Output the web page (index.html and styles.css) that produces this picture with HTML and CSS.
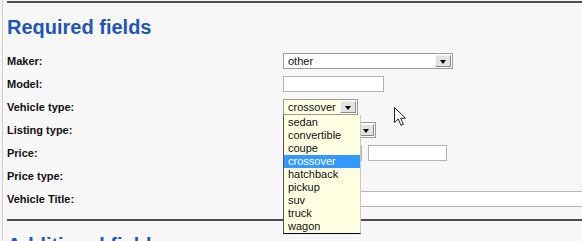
FILE: index.html
```html
<!DOCTYPE html>
<html>
<head>
<meta charset="utf-8">
<title>Add listing</title>
<link rel="stylesheet" href="styles.css">
</head>
<body>
<div class="page">
	<div class="rule"></div>
	<h2>Required fields</h2>

	<div class="row">
		<label>Maker:</label>
		<div class="select maker"><span class="value">other</span><span class="btn"></span></div>
	</div>
	<div class="row">
		<label>Model:</label>
		<div class="input model"></div>
	</div>
	<div class="row">
		<label>Vehicle type:</label>
		<div class="select vtype open">
			<span class="value">crossover</span><span class="btn"></span>
			<ul class="list">
				<li>sedan</li>
				<li>convertible</li>
				<li>coupe</li>
				<li class="picked">crossover</li>
				<li>hatchback</li>
				<li>pickup</li>
				<li>suv</li>
				<li>truck</li>
				<li>wagon</li>
			</ul>
		</div>
	</div>
	<div class="row">
		<label>Listing type:</label>
		<div class="select ltype"><span class="value"></span><span class="btn"></span></div>
	</div>
	<div class="row">
		<label>Price:</label>
		<div class="input price"></div>
		<div class="input price2"></div>
	</div>
	<div class="row">
		<label>Price type:</label>
		<div class="select ptype"><span class="value"></span><span class="btn"></span></div>
	</div>
	<div class="row">
		<label>Vehicle Title:</label>
		<div class="input title"></div>
	</div>

	<div class="rule low"></div>
	<h2>Additional fields</h2>
</div>

<svg class="cursor" width="14" height="20" viewBox="0 0 14 20">
	<path d="M0.5 0.5 L0.5 15.5 L4.2 12 L7 18.3 L9.4 17.3 L6.7 11.2 L11.5 11.2 Z" fill="#fff" stroke="#222" stroke-width="1" stroke-linejoin="round"/>
</svg>
</body>
</html>
```

FILE: styles.css
```css
html, body {
		margin:0;
		padding:0;
		overflow:hidden;
		background:#f7f7f7;
	}

body {
		font-family:"Liberation Sans", Arial, sans-serif;
		color:#111;
		width:582px;
		height:241px;
	}

.page {
		margin-left:2px;
		border-left:1px solid #cfcfcf;
		padding-left:4px;
		height:241px;
		overflow:hidden;
	}

.rule {
		margin-top:1px;
		border-top:2px solid #4d4d4d;
	}

.rule.low {
		margin-top:9px;
	}

h2 {
		margin:12px 0 10px 0;
		font-size:20px;
		line-height:24px;
		font-weight:bold;
		color:#1f56b6;
		white-space:nowrap;
	}

.row {
		display:flex;
		align-items:center;
		height:23px;
	}

label {
		width:276px;
		flex:none;
		font-size:11px;
		font-weight:bold;
	}

.input, .select {
		box-sizing:border-box;
		height:16px;
		border:1px solid #b4b4b4;
		background:#fff;
		flex:none;
	}

.model { width:101px; }
.price { width:79px; }
.price2 { width:79px; margin-left:6px; }
.title { width:300px; margin-top:1px; }

.select {
		position:relative;
		display:flex;
		align-items:center;
		border-color:#9a9a9a;
		font-size:11px;
		line-height:14px;
		margin-top:1px;
	}

.select .value {
		flex:1;
		padding-left:4px;
		white-space:nowrap;
		overflow:hidden;
	}

.select .btn {
		position:relative;
		box-sizing:border-box;
		width:16px;
		height:12px;
		margin-right:1px;
		background:#e3e3e3;
		border:1px solid #9c9c9c;
		border-color:#f4f4f4 #8a8a8a #8a8a8a #f4f4f4;
		flex:none;
	}

.select .btn:after {
		content:"";
		position:absolute;
		left:4px;
		top:4px;
		border-left:3.5px solid transparent;
		border-right:3.5px solid transparent;
		border-top:4px solid #000;
	}

.maker { width:170px; }
.vtype { width:75px; background:#ffffe1; }
.ltype { width:93px; }
.ptype { width:70px; }

.list {
		position:absolute;
		left:-1px;
		top:15px;
		width:76px;
		margin:0;
		padding:1px 0 0 0;
		list-style:none;
		background:#ffffe1;
		border-left:1px solid #555;
		border-right:1px solid #c8c8c8;
		border-bottom:1px solid #000;
		z-index:5;
	}

.list li {
		height:13px;
		line-height:13px;
		padding-left:4px;
		font-size:11px;
		color:#111;
	}

.list li.picked {
		background:#3399ff;
		color:#fff;
	}

.cursor {
		position:absolute;
		left:394px;
		top:107px;
	}
```
